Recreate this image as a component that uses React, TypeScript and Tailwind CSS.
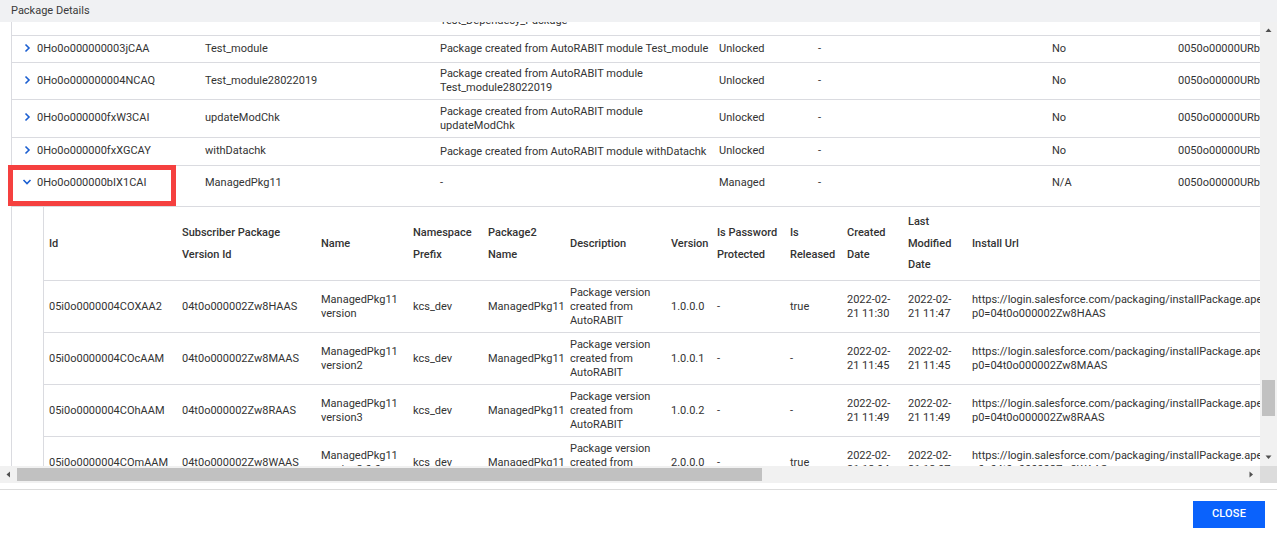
import React from 'react';

type PkgRow = {
  h: string;
  id: string;
  name: string;
  desc: string[];
  status: string;
  released: string;
  owner: string;
  open?: boolean;
};

// first row is scrolled mostly out of view, only its description tail shows
const pkgRows: PkgRow[] = [
  { h: 'h-[44px]', id: '', name: '', desc: ['Package created from AutoRABIT module', 'Test_Dependecy_Package'], status: '', released: '', owner: '' },
  { h: 'h-[27px]', id: '0Ho0o000000003jCAA', name: 'Test_module', desc: ['Package created from AutoRABIT module Test_module'], status: 'Unlocked', released: 'No', owner: '0050o00000URbnXAAT' },
  { h: 'h-[37px]', id: '0Ho0o000000004NCAQ', name: 'Test_module28022019', desc: ['Package created from AutoRABIT module', 'Test_module28022019'], status: 'Unlocked', released: 'No', owner: '0050o00000URbnXAAT' },
  { h: 'h-[38px]', id: '0Ho0o000000fxW3CAI', name: 'updateModChk', desc: ['Package created from AutoRABIT module', 'updateModChk'], status: 'Unlocked', released: 'No', owner: '0050o00000URbnXAAT' },
  { h: 'h-[28px]', id: '0Ho0o000000fxXGCAY', name: 'withDatachk', desc: ['Package created from AutoRABIT module withDatachk'], status: 'Unlocked', released: 'No', owner: '0050o00000URbnXAAT' },
  { h: 'h-[41px] pb-[6px]', id: '0Ho0o000000bIX1CAI', name: 'ManagedPkg11', desc: ['-'], status: 'Managed', released: 'N/A', owner: '0050o00000URbnXAAT', open: true },
];

type VersionRow = {
  id: string;
  sub: string;
  name: string[];
  ns: string;
  pkg: string;
  version: string;
  pw: string;
  rel: string;
  created: string[];
  modified: string[];
  url: string[];
};

const versions: VersionRow[] = [
  { id: '05i0o0000004COXAA2', sub: '04t0o000002Zw8HAAS', name: ['ManagedPkg11', 'version'], ns: 'kcs_dev', pkg: 'ManagedPkg11', version: '1.0.0.0', pw: '-', rel: 'true', created: ['2022-02-', '21 11:30'], modified: ['2022-02-', '21 11:47'], url: ['https://login.salesforce.com/packaging/installPackage.apexp?', 'p0=04t0o000002Zw8HAAS'] },
  { id: '05i0o0000004COcAAM', sub: '04t0o000002Zw8MAAS', name: ['ManagedPkg11', 'version2'], ns: 'kcs_dev', pkg: 'ManagedPkg11', version: '1.0.0.1', pw: '-', rel: '-', created: ['2022-02-', '21 11:45'], modified: ['2022-02-', '21 11:45'], url: ['https://login.salesforce.com/packaging/installPackage.apexp?', 'p0=04t0o000002Zw8MAAS'] },
  { id: '05i0o0000004COhAAM', sub: '04t0o000002Zw8RAAS', name: ['ManagedPkg11', 'version3'], ns: 'kcs_dev', pkg: 'ManagedPkg11', version: '1.0.0.2', pw: '-', rel: '-', created: ['2022-02-', '21 11:49'], modified: ['2022-02-', '21 11:49'], url: ['https://login.salesforce.com/packaging/installPackage.apexp?', 'p0=04t0o000002Zw8RAAS'] },
  { id: '05i0o0000004COmAAM', sub: '04t0o000002Zw8WAAS', name: ['ManagedPkg11', 'version2.0.0'], ns: 'kcs_dev', pkg: 'ManagedPkg11', version: '2.0.0.0', pw: '-', rel: 'true', created: ['2022-02-', '21 12:04'], modified: ['2022-02-', '21 12:07'], url: ['https://login.salesforce.com/packaging/installPackage.apexp?', 'p0=04t0o000002Zw8WAAS'] },
];

const Chevron = ({ open }: { open?: boolean }) => (
  <svg width="10" height="10" viewBox="0 0 10 10" className="shrink-0 mb-[3px]">
    {open ? (
      <path d="M1.5 3 L5 6.5 L8.5 3" stroke="#1b5fd1" strokeWidth="1.6" fill="none" />
    ) : (
      <path d="M3.5 1.5 L7 5 L3.5 8.5" stroke="#1b5fd1" strokeWidth="1.6" fill="none" />
    )}
  </svg>
);

const Lines = ({ lines }: { lines: string[] }) => (
  <div className="flex flex-col leading-[14px] whitespace-nowrap">
    {lines.map((l, i) => (
      <span key={i}>{l}</span>
    ))}
  </div>
);

const PackageRow = ({ row }: { row: PkgRow }) => (
  <div className={`flex items-center border-b border-[#dadbe0] ${row.h}`}>
    <div className="relative w-[183px] shrink-0 pl-[10px] flex items-center gap-[5px] self-stretch">
      {row.id && <Chevron open={row.open} />}
      <span className="whitespace-nowrap">{row.id}</span>
      {row.open && (
        <div className="absolute left-[-4px] top-[-1px] w-[168px] h-[41px] border-[5px] border-[#f5403f]" />
      )}
    </div>
    <div className="w-[235px] shrink-0 pl-[10px] whitespace-nowrap">{row.name}</div>
    <div className="w-[279px] shrink-0 pl-[10px]">
      <Lines lines={row.desc} />
    </div>
    <div className="w-[99px] shrink-0 pl-[10px]">{row.status}</div>
    <div className="w-[234px] shrink-0 pl-[10px]">{row.id ? '-' : ''}</div>
    <div className="w-[126px] shrink-0 pl-[10px]">{row.released}</div>
    <div className="w-[300px] shrink-0 pl-[10px] whitespace-nowrap">{row.owner}</div>
  </div>
);

const cols = ['w-[133px]', 'w-[139px]', 'w-[92px]', 'w-[75px]', 'w-[82px]', 'w-[101px]', 'w-[46px]', 'w-[73px]', 'w-[57px]', 'w-[61px]', 'w-[64px]', 'w-[700px]'];

const headers: string[][] = [
  ['Id'],
  ['Subscriber Package', 'Version Id'],
  ['Name'],
  ['Namespace', 'Prefix'],
  ['Package2', 'Name'],
  ['Description'],
  ['Version'],
  ['Is Password', 'Protected'],
  ['Is', 'Released'],
  ['Created', 'Date'],
  ['Last', 'Modified', 'Date'],
  ['Install Url'],
];

const VersionTable = () => (
  <div className="ml-[31px] border-l border-[#dadbe0]">
    <div className="flex items-center h-[74px] border-b border-[#dadbe0] font-medium text-[#333]">
      {headers.map((h, i) => (
        <div key={i} className={`${cols[i]} shrink-0 pl-[5px] flex flex-col leading-[21.5px] whitespace-nowrap`}>
          {h.map((l, j) => (
            <span key={j}>{l}</span>
          ))}
        </div>
      ))}
    </div>
    {versions.map((v) => {
      const cells: string[][] = [[v.id], [v.sub], v.name, [v.ns], [v.pkg], ['Package version', 'created from', 'AutoRABIT'], [v.version], [v.pw], [v.rel], v.created, v.modified, v.url];
      return (
        <div key={v.id} className="flex items-center h-[52px] border-b border-[#dadbe0]">
          {cells.map((c, i) => (
            <div key={i} className={`${cols[i]} shrink-0 pl-[5px]`}>
              <Lines lines={c} />
            </div>
          ))}
        </div>
      );
    })}
  </div>
);

const Triangle = ({ dir }: { dir: 'up' | 'down' | 'left' | 'right' }) => {
  const d = {
    up: 'M0.5 4 L3.5 0.5 L6.5 4 Z',
    down: 'M0.5 0.5 L3.5 4 L6.5 0.5 Z',
    left: 'M4 0.5 L0.5 3.5 L4 6.5 Z',
    right: 'M0.5 0.5 L4 3.5 L0.5 6.5 Z',
  }[dir];
  const vertical = dir === 'up' || dir === 'down';
  return (
    <svg width={vertical ? 7 : 5} height={vertical ? 5 : 7} viewBox={vertical ? '0 0 7 5' : '0 0 5 7'}>
      <path d={d} fill="#505050" />
    </svg>
  );
};

export default function App() {
  return (
    <div className="w-[1277px] h-[538px] flex flex-col bg-white text-[11px] text-[#333] font-['Roboto',sans-serif] overflow-hidden">
      <div className="h-[22px] shrink-0 bg-[#f0f1f3] flex items-center pl-[11px] text-[#3a3a3a]">Package Details</div>

      <div className="h-[444px] shrink-0 flex">
        <div className="flex-1 overflow-hidden">
          <div className="w-[2100px] -mt-[30px] ml-[11px] border-l border-[#dadbe0]">
            {pkgRows.map((r, i) => (
              <PackageRow key={i} row={r} />
            ))}
            <VersionTable />
          </div>
        </div>
        <div className="w-[17px] shrink-0 bg-[#f1f1f1] flex flex-col">
          <div className="h-[17px] flex items-center justify-center">
            <Triangle dir="up" />
          </div>
          <div className="flex-1 flex flex-col items-center">
            <div className="h-[341px]" />
            <div className="h-[36px] w-[13px] bg-[#c1c1c1]" />
          </div>
          <div className="h-[17px] flex items-center justify-center">
            <Triangle dir="down" />
          </div>
        </div>
      </div>

      <div className="h-[17px] shrink-0 flex">
        <div className="flex-1 bg-[#f1f1f1] flex">
          <div className="w-[17px] flex items-center justify-center">
            <Triangle dir="left" />
          </div>
          <div className="flex-1 flex items-center">
            <div className="w-[745px] h-[13px] bg-[#c1c1c1]" />
          </div>
          <div className="w-[17px] flex items-center justify-center">
            <Triangle dir="right" />
          </div>
        </div>
        <div className="w-[17px] bg-[#dcdcdc]" />
      </div>

      <div className="h-[6px] shrink-0" />

      <div className="flex-1 border-t border-[#dcdcdc] flex justify-end items-start pt-[11px] pr-[12px]">
        <button className="w-[72px] h-[27px] bg-[#0a62fc] text-white font-medium text-[11px] tracking-[0.2px]">CLOSE</button>
      </div>
    </div>
  );
}
